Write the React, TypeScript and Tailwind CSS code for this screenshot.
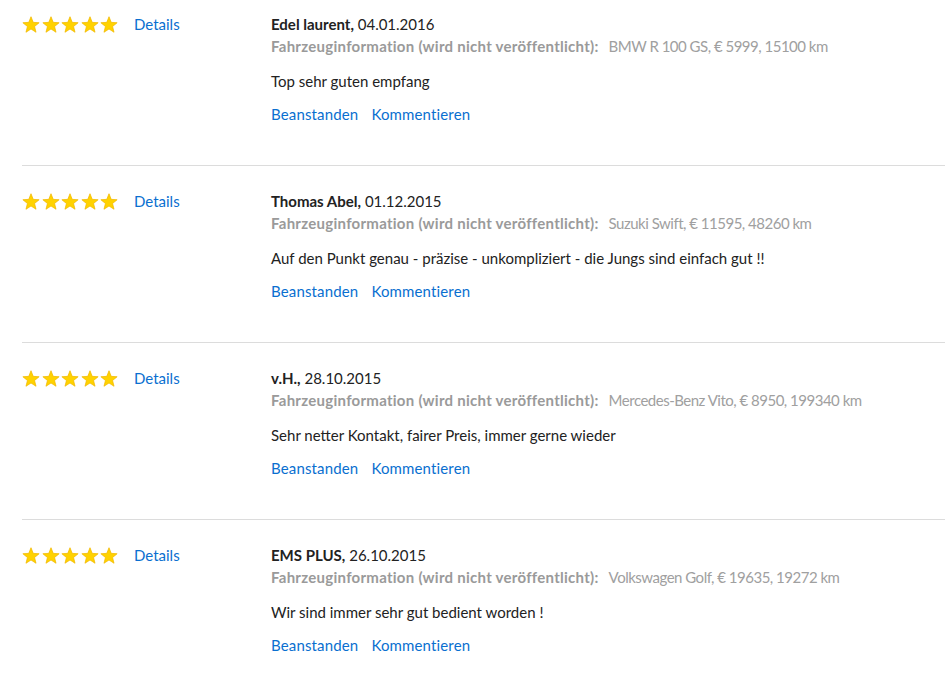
import React from 'react';

interface Review {
  id: string;
  name: string;
  date: string;
  vehicle: string;
  comment: string;
}

const reviews: Review[] = [
  { id: '1', name: 'Edel laurent', date: '04.01.2016', vehicle: 'BMW R 100 GS, € 5999, 15100 km', comment: 'Top sehr guten empfang' },
  { id: '2', name: 'Thomas Abel', date: '01.12.2015', vehicle: 'Suzuki Swift, € 11595, 48260 km', comment: 'Auf den Punkt genau - präzise - unkompliziert - die Jungs sind einfach gut !!' },
  { id: '3', name: 'v.H.', date: '28.10.2015', vehicle: 'Mercedes-Benz Vito, € 8950, 199340 km', comment: 'Sehr netter Kontakt, fairer Preis, immer gerne wieder' },
  { id: '4', name: 'EMS PLUS', date: '26.10.2015', vehicle: 'Volkswagen Golf, € 19635, 19272 km', comment: 'Wir sind immer sehr gut bedient worden !' },
];

const Star = () => (
  <svg width="18" height="17" viewBox="0 0 24 23" aria-hidden="true">
    <polygon
      points="12,1 15,8.6 23,9.1 16.8,14.2 18.8,22 12,17.6 5.2,22 7.2,14.2 1,9.1 9,8.6"
      fill="#ffd200"
      stroke="#f2b800"
      strokeWidth="1"
      strokeLinejoin="round"
    />
  </svg>
);

export default function App() {
  return (
    <div className="min-h-screen bg-white pl-[22px] text-[15px] text-[#222] [font-family:Lato,'Open_Sans',sans-serif]">
      {reviews.map((r) => (
        <div key={r.id} className="flex border-b border-[#dcdcdc] pt-6 pb-10 first:pt-[13px]">
          {/* Left: rating + details link */}
          <div className="flex w-[249px] shrink-0 items-start">
            <div className="flex h-[22px] items-center gap-[1.5px]">
              <Star />
              <Star />
              <Star />
              <Star />
              <Star />
            </div>
            <a href="#" className="ml-4 leading-[22px] text-[#0a6fd0]">Details</a>
          </div>

          {/* Right: review body */}
          <div className="flex flex-col">
            <div className="leading-[22px]">
              <span className="font-bold">{r.name},</span> {r.date}
            </div>
            <div className="leading-[22px] text-[#9a9a9a]">
              <span className="font-bold tracking-[0.27px]">Fahrzeuginformation (wird nicht veröffentlicht):</span>
              <span className="ml-[10px] tracking-[-0.5px] text-[#a0a0a0]">{r.vehicle}</span>
            </div>
            <p className="mt-[13px] leading-[22px]">{r.comment}</p>
            <div className="mt-[11px] flex gap-[13px] leading-[22px] tracking-[0.15px] text-[#0a6fd0]">
              <a href="#">Beanstanden</a>
              <a href="#">Kommentieren</a>
            </div>
          </div>
        </div>
      ))}
    </div>
  );
}
